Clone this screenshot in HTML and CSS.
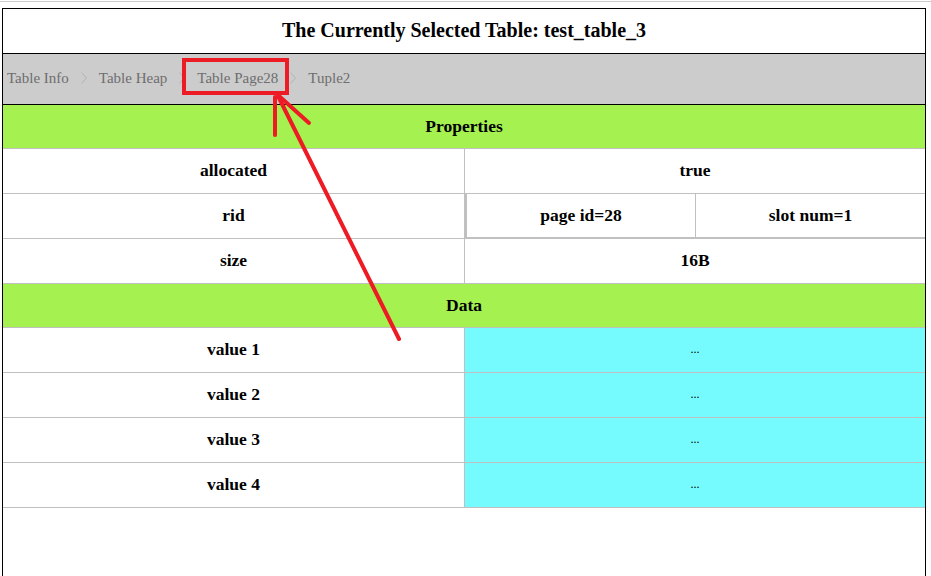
FILE: index.html
```html
<!DOCTYPE html>
<html>
<head>
<meta charset="utf-8">
<link rel="stylesheet" href="styles.css">
</head>
<body>
<div class="topline"></div>
<div class="panel">
  <div class="title">The Currently Selected Table: test_table_3</div>
  <nav class="crumbs">
    <span class="crumb">Table Info</span>
    <svg class="sep" width="8" height="14" viewBox="0 0 8 14"><polyline points="1.5,1.5 6.5,7 1.5,12.5" fill="none" stroke="#b3b3b3" stroke-width="1"/></svg>
    <span class="crumb">Table Heap</span>
    <svg class="sep" width="8" height="14" viewBox="0 0 8 14"><polyline points="1.5,1.5 6.5,7 1.5,12.5" fill="none" stroke="#b3b3b3" stroke-width="1"/></svg>
    <span class="crumb">Table Page28</span>
    <svg class="sep" width="8" height="14" viewBox="0 0 8 14"><polyline points="1.5,1.5 6.5,7 1.5,12.5" fill="none" stroke="#b3b3b3" stroke-width="1"/></svg>
    <span class="crumb">Tuple2</span>
  </nav>
  <div class="grid">
    <div class="section">Properties</div>
    <div class="row">
      <div class="key">allocated</div>
      <div class="val">true</div>
    </div>
    <div class="row">
      <div class="key">rid</div>
      <div class="val nested">
        <div class="sub">page id=28</div>
        <div class="sub">slot num=1</div>
      </div>
    </div>
    <div class="row">
      <div class="key">size</div>
      <div class="val">16B</div>
    </div>
    <div class="section">Data</div>
    <div class="row">
      <div class="key">value 1</div>
      <div class="val data">...</div>
    </div>
    <div class="row">
      <div class="key">value 2</div>
      <div class="val data">...</div>
    </div>
    <div class="row">
      <div class="key">value 3</div>
      <div class="val data">...</div>
    </div>
    <div class="row">
      <div class="key">value 4</div>
      <div class="val data">...</div>
    </div>
  </div>
</div>
<svg class="annot" width="931" height="576" viewBox="0 0 931 576">
  <rect x="184" y="60" width="103" height="33" fill="none" stroke="#ed1c24" stroke-width="4"/>
  <g stroke="#ed1c24" stroke-width="4" stroke-linecap="round" fill="none">
    <line x1="399" y1="339" x2="278" y2="96"/>
    <line x1="275" y1="97" x2="275" y2="135"/>
    <line x1="279" y1="96" x2="309" y2="123"/>
  </g>
</svg>
</body>
</html>
```
FILE: styles.css
```css
html, body {
  margin: 0;
  padding: 0;
  background: #ffffff;
  overflow: hidden;
}
body {
  font-family: "Liberation Serif", "Times New Roman", serif;
  color: #000;
  position: relative;
  width: 931px;
  height: 576px;
}
.topline {
  height: 1px;
  margin-top: 1px;
  background: #cccccc;
}
.panel {
  margin: 6px 0 0 2px;
  width: 922px;
  height: 620px;
  border: 1px solid #000;
  box-sizing: content-box;
}
.title {
  height: 42px;
  padding-bottom: 2px;
  line-height: 42px;
  text-align: center;
  font-weight: bold;
  font-size: 20px;
  border-bottom: 1px solid #000;
}
.crumbs {
  height: 48px;
  padding-bottom: 2px;
  background: #cccccc;
  border-bottom: 1px solid #000;
  display: flex;
  align-items: center;
  padding-left: 4px;
  font-size: 15px;
  color: #6e6e6e;
}
.crumb {
  line-height: 20px;
}
.sep {
  margin: 0 11px 0 11px;
  display: block;
}
.grid {
  display: flex;
  flex-direction: column;
}
.section {
  height: 43px;
  line-height: 42px;
  background: #a5f150;
  text-align: center;
  font-weight: bold;
  font-size: 17.5px;
  border-bottom: 1px solid #c0c0c0;
}
.row {
  display: flex;
  height: 44px;
  border-bottom: 1px solid #c0c0c0;
}
.key {
  width: 461px;
  border-right: 1px solid #c0c0c0;
  display: flex;
  align-items: center;
  justify-content: center;
  font-weight: bold;
  font-size: 17.5px;
  padding-bottom: 1px;
}
.val {
  flex: 1;
  display: flex;
  align-items: center;
  justify-content: center;
  font-weight: bold;
  font-size: 17.5px;
  padding-bottom: 1px;
}
.nested {
  align-items: stretch;
  border-left: 2px solid #c0c0c0;
  border-bottom: 2px solid #c0c0c0;
  margin-bottom: -1px;
  padding-bottom: 0;
}
.sub {
  display: flex;
  align-items: center;
  justify-content: center;
  width: 228px;
}
.sub + .sub {
  flex: 1;
  border-left: 1px solid #c0c0c0;
}
.data {
  background: #75fbfd;
  font-weight: normal;
  font-size: 12px;
}
.annot {
  position: absolute;
  left: 0;
  top: 0;
  pointer-events: none;
}
```
